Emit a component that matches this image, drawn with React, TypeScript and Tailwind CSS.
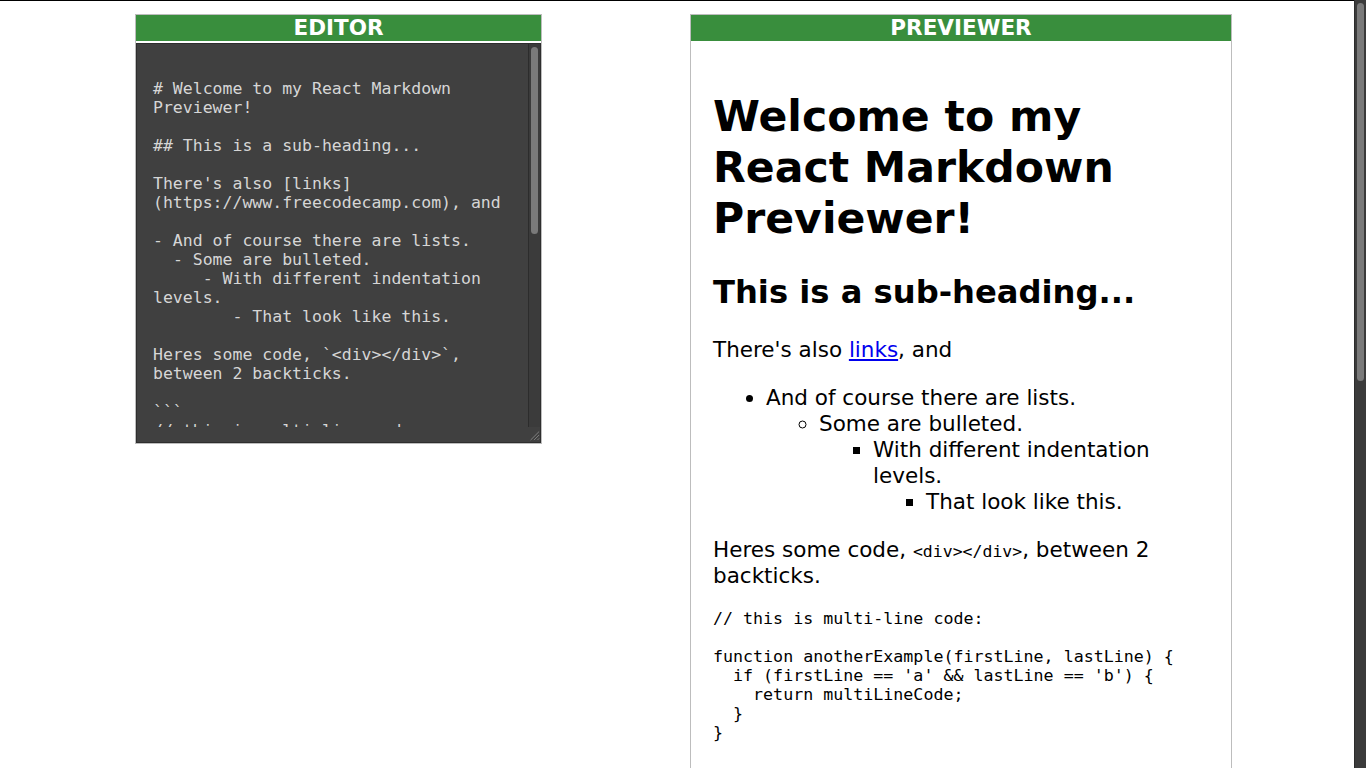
import React, { useState } from 'react';

const DEFAULT_MD = `
# Welcome to my React Markdown Previewer!

## This is a sub-heading...

There's also [links](https://www.freecodecamp.com), and

- And of course there are lists.
  - Some are bulleted.
     - With different indentation levels.
        - That look like this.

Heres some code, \`<div></div>\`, between 2 backticks.

\`\`\`
// this is multi-line code:

function anotherExample(firstLine, lastLine) {
  if (firstLine == 'a' && lastLine == 'b') {
    return multiLineCode;
  }
}
\`\`\`

You can also make text **bold**... whoa!
Or _italic_.
Or... wait for it... **_both!_**
And feel free to go crazy ~~crossing stuff out~~.

> Block Quotes!

1. And there are numbered lists too.
1. Use just 1s if you want!
1. And last but not least, let's not forget embedded images:

![freeCodeCamp Logo](https://cdn.freecodecamp.org/testable-projects-fcc/images/fcc_secondary.svg)
`;

const codeBlock = `// this is multi-line code:

function anotherExample(firstLine, lastLine) {
  if (firstLine == 'a' && lastLine == 'b') {
    return multiLineCode;
  }
}`;

const Header = ({ title }: { title: string }) => (
    <div className="h-[26px] bg-[#398e3d] flex items-center justify-center text-white font-bold text-[21.5px] leading-none font-['DejaVu_Sans',sans-serif]">
        {title}
    </div>
);

// fake scrollbar (dark theme), the page shot shows them
const ScrollTrack = ({ thumbTop, thumbHeight }: { thumbTop: number; thumbHeight: number }) => (
    <div className="relative h-full w-[12px] bg-[#3b3b3b] border-l border-[#2c2c2c]">
        <div
            className="absolute left-[2px] w-[7px] rounded-full bg-[#7a7a7a]"
            style={{ top: thumbTop, height: thumbHeight }}
        />
    </div>
);

const Resizer = () => (
    <svg width="14" height="15" viewBox="0 0 14 15" className="block">
        <line x1="13" y1="4" x2="3" y2="14" stroke="#8a8a8a" strokeWidth="1" />
        <line x1="13" y1="8" x2="7" y2="14" stroke="#8a8a8a" strokeWidth="1" />
        <line x1="13" y1="12" x2="11" y2="14" stroke="#8a8a8a" strokeWidth="1" />
    </svg>
);

export default function App() {
    const [markdown, setMarkdown] = useState(DEFAULT_MD);

    return (
        <div className="h-screen flex bg-white overflow-hidden">
            <div className="flex-1 min-w-0 overflow-hidden border-t border-black">
                <div className="flex items-start pl-[135px] pb-[24px]">
                    {/* editor */}
                    <div className="w-[407px] mt-[13px] border border-[#bdbdbd] bg-white">
                        <Header title="EDITOR" />
                        <div className="mt-[2px] h-[400px] bg-[#404040] border border-[#2e2e2e] flex">
                            <div className="flex-1 min-w-0 flex flex-col">
                                <textarea
                                    value={markdown}
                                    onChange={e => setMarkdown(e.target.value)}
                                    className="block w-full h-[383px] resize-none overflow-hidden bg-transparent text-[#d6d6d6] pt-[16px] px-[16px] font-['DejaVu_Sans_Mono',monospace] text-[16.5px] leading-[19px] outline-none"
                                />
                            </div>
                            <div className="w-[12px] flex flex-col">
                                <div className="h-[383px]">
                                    <ScrollTrack thumbTop={3} thumbHeight={187} />
                                </div>
                                <div className="flex-1 flex items-end justify-end">
                                    <Resizer />
                                </div>
                            </div>
                        </div>
                    </div>

                    {/* previewer */}
                    <div className="w-[542px] ml-[148px] mt-[13px] border border-[#bdbdbd] bg-white">
                        <Header title="PREVIEWER" />
                        <div className="px-[22px] pt-[21px] pb-[40px] text-black font-['DejaVu_Sans',sans-serif] text-[21.5px] leading-[26px]">
                            <h1 className="text-[42.6px] leading-[51px] font-bold mt-[29px] mb-[29px]">
                                Welcome to my React Markdown Previewer!
                            </h1>
                            <h2 className="text-[32.2px] leading-[38px] font-bold mt-[28px] mb-[26px]">
                                This is a sub-heading...
                            </h2>
                            <p className="my-[22px]">
                                There's also <a href="#" className="text-[#0000ee] underline">links</a>, and
                            </p>
                            <ul className="list-disc pl-[53px] my-[22px]">
                                <li>
                                    And of course there are lists.
                                    <ul className="list-[circle] pl-[53px]">
                                        <li>
                                            Some are bulleted.
                                            <ul className="list-[square] pl-[54px]">
                                                <li>
                                                    With different indentation levels.
                                                    <ul className="list-[square] pl-[53px]">
                                                        <li>That look like this.</li>
                                                    </ul>
                                                </li>
                                            </ul>
                                        </li>
                                    </ul>
                                </li>
                            </ul>
                            <p className="mt-[22px] mb-[20px]">
                                Heres some code,{' '}
                                <code className="font-['DejaVu_Sans_Mono',monospace] text-[16.5px] leading-none">{'<div></div>'}</code>
                                , between 2 backticks.
                            </p>
                            <pre className="mt-[20px] mb-[22px] font-['DejaVu_Sans_Mono',monospace] text-[16.65px] leading-[19px] whitespace-pre">
                                {codeBlock}
                            </pre>
                            <p className="my-[22px]">
                                You can also make text <strong>bold</strong>... whoa!
                                <br />
                                Or <em>italic</em>.
                                <br />
                                Or... wait for it... <strong><em>both!</em></strong>
                                <br />
                                And feel free to go crazy <del>crossing stuff out</del>.
                            </p>
                            <blockquote className="my-[22px] mx-[40px]">
                                <p>Block Quotes!</p>
                            </blockquote>
                            <ol className="list-decimal pl-[53px] my-[22px]">
                                <li>And there are numbered lists too.</li>
                                <li>Use just 1s if you want!</li>
                                <li>And last but not least, let's not forget embedded images:</li>
                            </ol>
                            <p className="my-[22px]">
                                <span className="inline-flex items-center gap-2 text-[#0a0a23] font-bold">
                                    <svg width="40" height="28" viewBox="0 0 40 28" fill="none" stroke="#0a0a23" strokeWidth="3">
                                        <path d="M8 3 C3 9 3 19 8 25" />
                                        <path d="M32 3 C37 9 37 19 32 25" />
                                        <path d="M20 6 C14 12 16 16 18 14 C20 18 24 16 22 10" />
                                    </svg>
                                    freeCodeCamp
                                </span>
                            </p>
                            <div className="h-[150px]" />
                        </div>
                    </div>
                </div>
            </div>

            {/* page scrollbar */}
            <div className="w-[12px] h-full">
                <ScrollTrack thumbTop={3} thumbHeight={378} />
            </div>
        </div>
    );
}
